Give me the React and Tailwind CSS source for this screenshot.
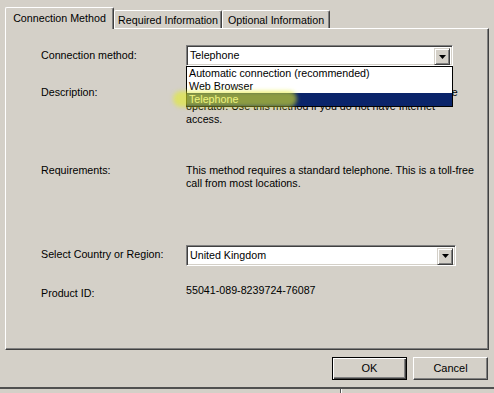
import React from "react";

const font = { fontFamily: "Tahoma, 'Liberation Sans', Arial, sans-serif" };

const DropButton = () => (
  <div className="absolute right-[2px] top-[2px] flex h-[17px] w-[16px] items-center justify-center border border-t-[#d4d0c8] border-l-[#d4d0c8] border-r-[#404040] border-b-[#404040] bg-[#d4d0c8] shadow-[inset_1px_1px_0_#ffffff,inset_-1px_-1px_0_#808080]">
    <svg width="7" height="4" viewBox="0 0 7 4">
      <path d="M0 0h7L3.5 4z" fill="#000" />
    </svg>
  </div>
);

const Combo = ({ value, width, children }) => (
  <div
    className={`relative h-[21px] ${width} border border-t-[#808080] border-l-[#808080] border-r-white border-b-white bg-white shadow-[inset_1px_1px_0_#404040,inset_-1px_-1px_0_#d4d0c8]`}
  >
    <span className="absolute left-[3px] top-[3px] leading-[13px] text-black">
      {value}
    </span>
    <DropButton />
    {children}
  </div>
);

const Tab = ({ label, active }) =>
  active ? (
    <div className="relative z-10 -mb-px flex h-[22px] w-[109px] items-start justify-center rounded-tl-[2px] rounded-tr-[2px] border-l border-t border-r border-l-white border-t-white border-r-[#404040] bg-[#d4d0c8] pt-[2px] shadow-[inset_-1px_0_0_#808080]">
      {label}
    </div>
  ) : (
    <div className="flex h-[18px] w-[108px] items-start justify-center rounded-tl-[2px] rounded-tr-[2px] border-l border-t border-r border-l-white border-t-white border-r-[#404040] bg-[#d4d0c8] pt-[1px] shadow-[inset_-1px_0_0_#808080]">
      {label}
    </div>
  );

const App = () => {
  const methods = [
    "Automatic connection (recommended)",
    "Web Browser",
    "Telephone",
  ];

  return (
    <div
      style={font}
      className="relative h-[393px] w-[494px] overflow-hidden bg-[#d4d0c8] text-[10.7px] text-black"
    >
      <div className="flex items-end pl-[5px] pt-[7px]">
        <Tab label="Connection Method" active />
        <Tab label="Required Information" />
        <Tab label="Optional Information" />
      </div>

      <div className="relative ml-[5px] h-[322px] w-[484px] border border-t-white border-l-white border-r-[#404040] border-b-[#404040] shadow-[inset_-1px_-1px_0_#808080] leading-[13.5px]">
        <div className="pl-[35px]">
          <div className="mt-[16px] flex items-center">
            <div className="w-[145px]">Connection method:</div>
            <Combo value="Telephone" width="w-[267px]">
              <div className="absolute left-[-1px] top-[20px] z-20 w-[267px] border border-black bg-white">
                {methods.map((item) =>
                  item === "Telephone" ? (
                    <div
                      key={item}
                      className="h-[13px] bg-[#0a246a] pl-[2px] leading-[13px] text-white"
                    >
                      {item}
                    </div>
                  ) : (
                    <div key={item} className="h-[13px] pl-[2px] leading-[13px]">
                      {item}
                    </div>
                  )
                )}
              </div>
              <div className="pointer-events-none absolute left-[-14px] top-[45px] z-30 h-[16px] w-[124px] rounded-full bg-[rgba(226,236,40,0.6)] blur-[2px]" />
            </Combo>
          </div>

          <div className="mt-[20px] flex">
            <div className="w-[145px]">Description:</div>
            <p className="whitespace-nowrap">
              <span className="tracking-[0.08px]">
                Talk to a customer service representative by a telephone
              </span>
              <br />
              operator. Use this method if you do not have Internet
              <br />
              access.
            </p>
          </div>

          <div className="mt-[37px] flex">
            <div className="w-[145px]">Requirements:</div>
            <p className="whitespace-nowrap">
              This method requires a standard telephone. This is a toll-free
              <br />
              call from most locations.
            </p>
          </div>

          <div className="mt-[54px] flex items-center">
            <div className="w-[145px]">Select Country or Region:</div>
            <Combo value="United Kingdom" width="w-[270px]" />
          </div>

          <div className="mt-[18px] flex">
            <div className="w-[145px] pt-[3px]">Product ID:</div>
            <div>55041-089-8239724-76087</div>
          </div>
        </div>
      </div>

      <div className="mt-[7px] flex justify-end gap-[6px] pr-[6px]">
        <button
          type="button"
          className="h-[23px] w-[75px] border border-black bg-[#d4d0c8] text-[11px] shadow-[inset_1px_1px_0_#ffffff,inset_-1px_-1px_0_#404040,inset_-2px_-2px_0_#808080]"
        >
          OK
        </button>
        <button
          type="button"
          className="h-[23px] w-[75px] border border-t-white border-l-white border-r-[#404040] border-b-[#404040] bg-[#d4d0c8] text-[11px] shadow-[inset_-1px_-1px_0_#808080]"
        >
          Cancel
        </button>
      </div>

      <div className="mt-[7px] h-[2px] w-full bg-[#505050]" />
      <div className="ml-[340px] flex h-[4px]">
        <div className="w-px bg-[#505050]" />
        <div className="w-px bg-white" />
      </div>
    </div>
  );
};

export default App;
